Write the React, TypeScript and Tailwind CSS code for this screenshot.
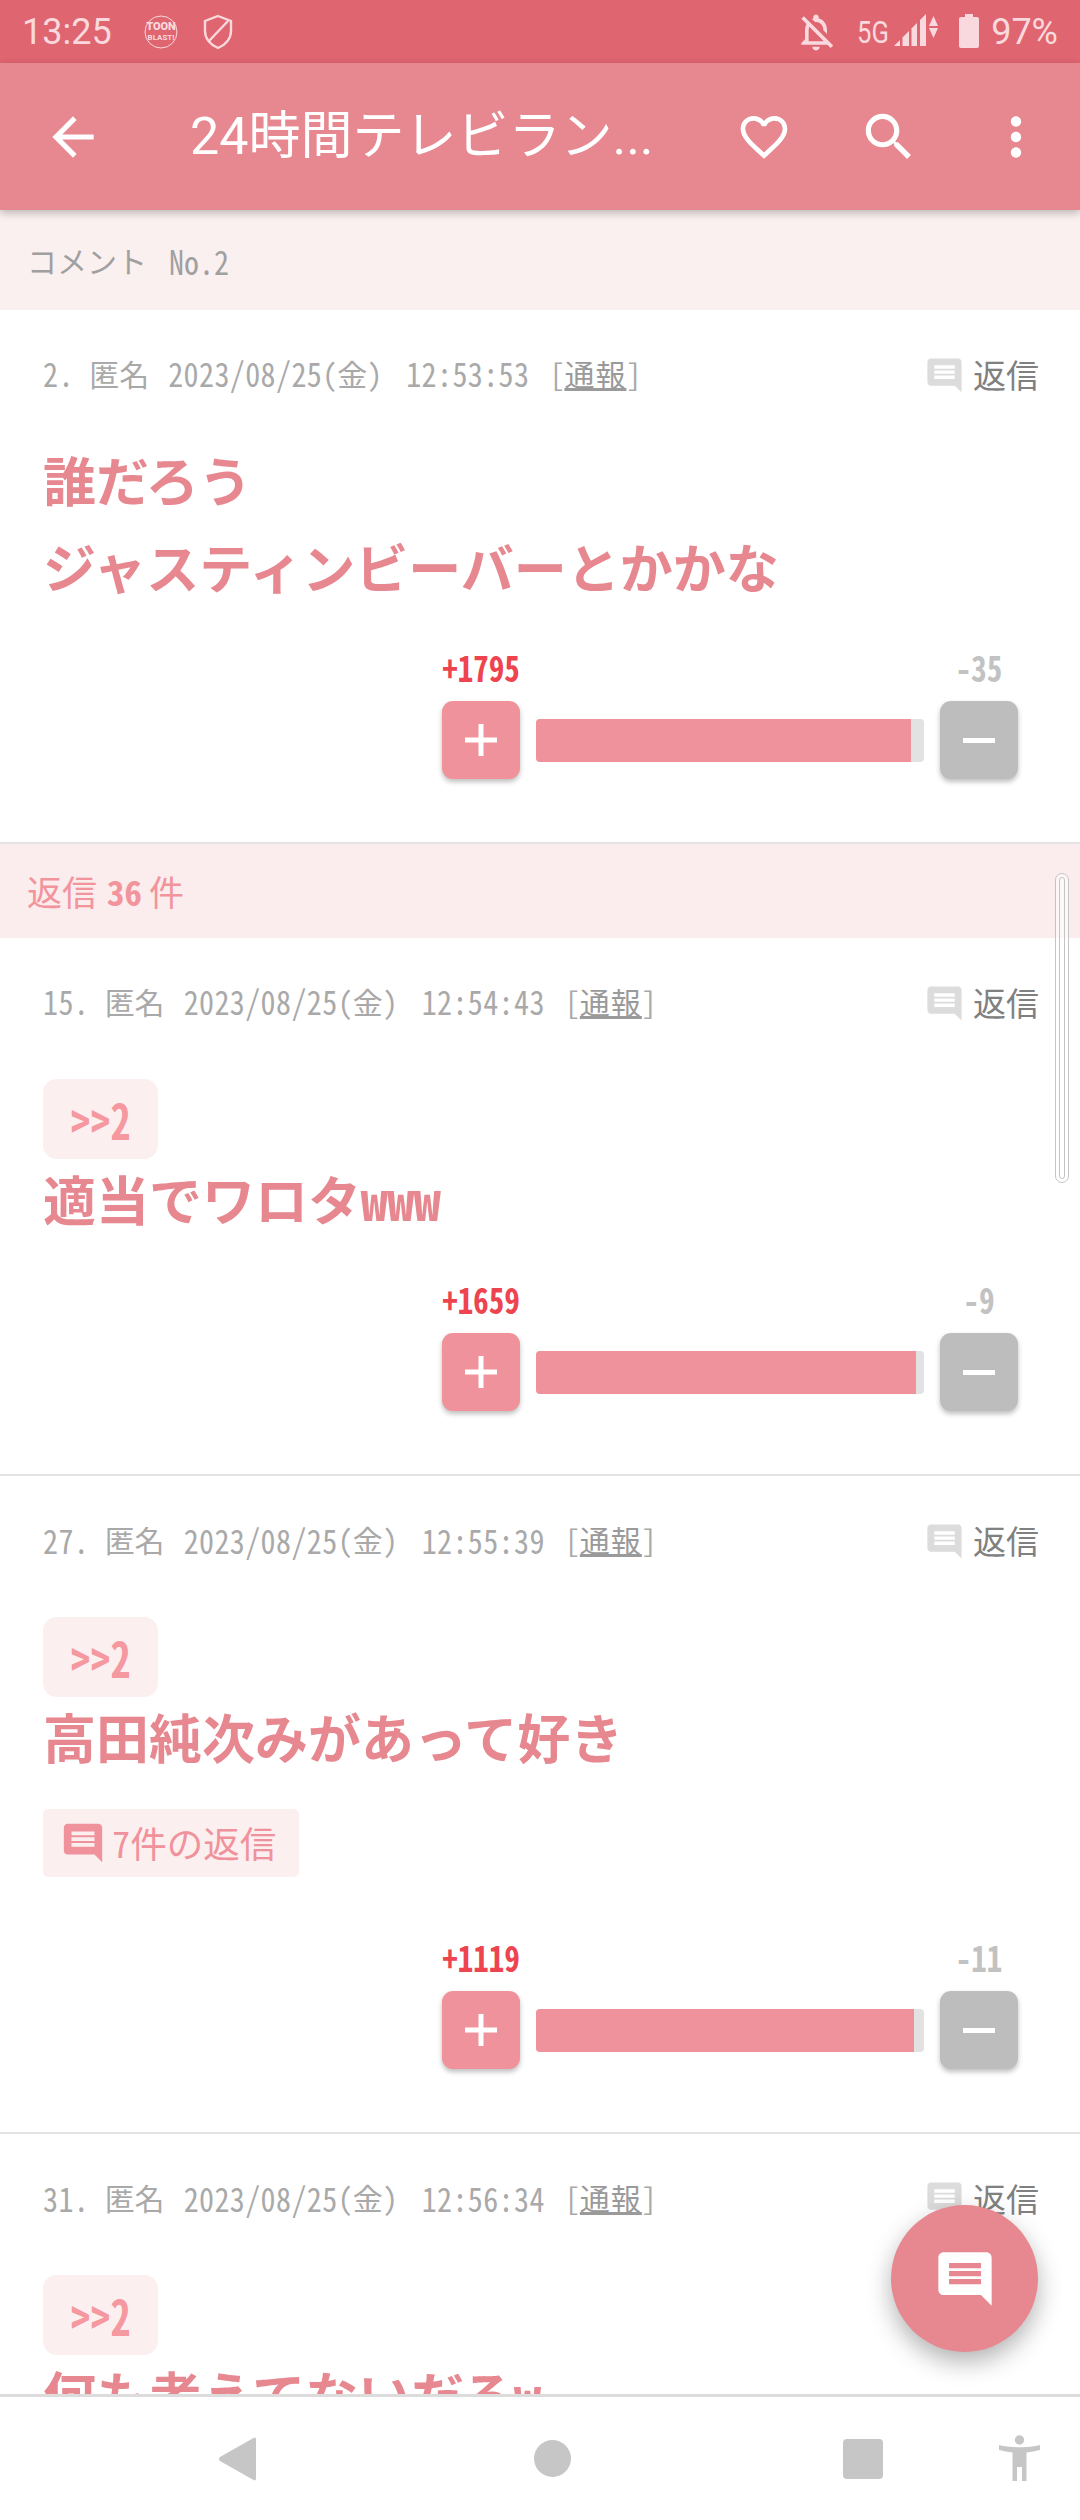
import type { ReactNode } from "react";

const cjk = "font-['Noto_Sans_CJK_JP',sans-serif]";
// half-width latin glyphs, the picture uses them for all digits
const hw = "[font-feature-settings:'hwid']";
const COMMENT_PATH =
  "M21.99 4c0-1.1-.89-2-1.99-2H4c-1.1 0-2 .9-2 2v12c0 1.1.9 2 2 2h14l4 4-.01-18zM18 14H6v-2h12v2zm0-3H6V9h12v2zm0-3H6V6h12v2z";

function Icon({ d, className }: { d: string; className: string }) {
  return (
    <svg viewBox="0 0 24 24" className={className} fill="currentColor">
      <path d={d} />
    </svg>
  );
}

function StatusBar() {
  return (
    <div className="flex h-[63px] shrink-0 items-center bg-[#df6570] pl-[22px] pr-[22px] font-['Roboto',sans-serif] text-[36px] text-[#f9d9dd]">
      <span>13:25</span>
      {/* game notification icon */}
      <svg viewBox="0 0 34 34" className="ml-[32px] h-[34px] w-[34px]">
        <circle cx="17" cy="17" r="16" fill="none" stroke="currentColor" strokeWidth="1" />
        <text x="17" y="15" textAnchor="middle" fontSize="11" fontWeight="900" fontFamily="Roboto" fill="currentColor">
          TOON
        </text>
        <text x="17" y="25" textAnchor="middle" fontSize="8" fontWeight="700" fontFamily="Roboto" fill="currentColor">
          BLAST!
        </text>
      </svg>
      <svg viewBox="0 0 30 36" className="ml-[25px] h-[36px] w-[30px]" fill="none" stroke="currentColor" strokeWidth="2.4">
        <path d="M15 2 L28 7 V17 C28 25 22 31 15 34 C8 31 2 25 2 17 V7 Z" />
        <path d="M6 27 L25 7" />
      </svg>
      <Icon
        d="M12 22c1.1 0 2-.9 2-2h-4c0 1.1.9 2 2 2zm0-15.5c2.49 0 4 2.02 4 4.5v.1l2 2V11c0-3.08-1.64-5.64-4.5-6.32V4c0-.83-.67-1.5-1.5-1.5s-1.5.67-1.5 1.5v.68c-.24.06-.47.15-.69.23l1.64 1.64c.18-.02.36-.05.55-.05zM5.41 3.35L4 4.76l2.81 2.81C6.29 8.57 6 9.74 6 11v5l-2 2v1h14.24l1.74 1.74 1.41-1.41L5.41 3.35zM16 17H8v-6c0-.68.12-1.32.34-1.9L16 16.76V17z"
        className="ml-auto h-[44px] w-[44px]"
      />
      <span className="ml-[19px] inline-block w-[37px] origin-left scale-x-[.8] whitespace-nowrap text-[32px]">5G</span>
      <svg viewBox="0 0 32 32" className="mb-[4px] h-[32px] w-[32px]" fill="currentColor">
        <polygon points="0,32 6,26 6,32" />
        <polygon points="8.5,32 8.5,23.5 15,17 15,32" />
        <polygon points="17.5,32 17.5,14.5 23,9 23,32" />
        <polygon points="26,32 26,6 32,0 32,32" />
      </svg>
      <svg viewBox="0 0 9 22" className="mb-[10px] ml-[3px] h-[22px] w-[9px]" fill="currentColor">
        <polygon points="4.5,0 9,10 0,10" />
        <polygon points="0,12 9,12 4.5,22" />
      </svg>
      <svg viewBox="0 0 20 34" className="mb-[2px] ml-[21px] h-[34px] w-[20px]" fill="currentColor">
        <path d="M6 0h8v3h4a2 2 0 0 1 2 2v27a2 2 0 0 1-2 2H2a2 2 0 0 1-2-2V5a2 2 0 0 1 2-2h4z" />
      </svg>
      <span className="ml-[12px]">97%</span>
    </div>
  );
}

function Header() {
  return (
    <div className="relative z-10 flex h-[147px] shrink-0 items-center bg-[#e7878f] pl-[42px] text-white shadow-[0_3px_8px_rgba(0,0,0,0.25)]">
      <Icon d="M20 11H7.83l5.59-5.59L12 4l-8 8 8 8 1.41-1.41L7.83 13H20v-2z" className="h-[62px] w-[62px]" />
      <div className="ml-[86px] w-[546px] font-['Roboto','Noto_Sans_CJK_JP',sans-serif] text-[52px]">24時間テレビラン...</div>
      <Icon
        d="M16.5 3c-1.74 0-3.41.81-4.5 2.09C10.91 3.81 9.24 3 7.5 3 4.42 3 2 5.42 2 8.5c0 3.78 3.4 6.86 8.55 11.54L12 21.35l1.45-1.32C18.6 15.36 22 12.28 22 8.5 22 5.42 19.58 3 16.5 3zm-4.4 15.55l-.1.1-.1-.1C7.14 14.24 4 11.39 4 8.5 4 6.5 5.5 5 7.5 5c1.54 0 3.04.99 3.57 2.36h1.87C13.46 5.99 14.96 5 16.5 5c2 0 3.5 1.5 3.5 3.5 0 2.89-3.14 5.74-7.9 10.05z"
        className="h-[56px] w-[56px]"
      />
      <Icon
        d="M15.5 14h-.79l-.28-.27C15.41 12.59 16 11.11 16 9.5 16 5.91 13.09 3 9.5 3S3 5.91 3 9.5 5.91 16 9.5 16c1.61 0 3.09-.59 4.23-1.57l.27.28v.79l5 4.99L20.49 19l-4.99-5zm-6 0C7.01 14 5 11.99 5 9.5S7.01 5 9.5 5 14 7.01 14 9.5 11.99 14 9.5 14z"
        className="ml-[66px] h-[62px] w-[62px]"
      />
      <Icon
        d="M12 8c1.1 0 2-.9 2-2s-.9-2-2-2-2 .9-2 2 .9 2 2 2zm0 2c-1.1 0-2 .9-2 2s.9 2 2 2 2-.9 2-2-.9-2-2-2zm0 6c-1.1 0-2 .9-2 2s.9 2 2 2 2-.9 2-2-.9-2-2-2z"
        className="ml-[65px] h-[62px] w-[62px]"
      />
    </div>
  );
}

function Reply() {
  return (
    <div className={`${cjk} mr-[-2px] flex items-center text-[33px] text-[#808080]`}>
      <Icon d={COMMENT_PATH} className="h-[41px] w-[41px] text-[#dcdcdc]" />
      <span className="ml-[8px]">返信</span>
    </div>
  );
}

function MetaRow({ no, date, time }: { no: string; date: string; time: string }) {
  const digits = `${hw} inline-block scale-y-[1.12] tracking-[.4px]`;
  return (
    <div className="flex h-[40px] items-center justify-between">
      <div className={`${cjk} mb-[3px] whitespace-pre text-[30px] text-[#a9a9a9]`}>
        <span className={digits}>{no}. </span>
        匿名
        <span className={hw}> </span>
        <span className={`${digits} ml-[4px]`}>{date}</span>
        <span className={hw}>(</span>金<span className={hw}>) </span>
        <span className={`${digits} ml-[9px]`}>{time}</span>
        <span className={`${hw} ml-[5px]`}> [</span>
        <span className="tracking-[1px] text-[#9a9a9a] underline">通報</span>
        <span className={hw}>]</span>
      </div>
      <Reply />
    </div>
  );
}

function Vote({ plus, minus, fill, top }: { plus: string; minus: string; fill: number; top: string }) {
  return (
    <div className={`ml-[399px] w-[576px] ${top}`}>
      <div className={`${cjk} ${hw} flex h-[40px] items-center justify-between text-[31px] font-bold`}>
        <span className="w-[78px] scale-y-[1.15] text-center text-[#ee4450]">{plus}</span>
        <span className="w-[78px] scale-y-[1.15] text-center text-[#c2c2c2]">{minus}</span>
      </div>
      <div className="mt-[14px] flex items-center">
        <div className="flex h-[78px] w-[78px] items-center justify-center rounded-[11px] bg-[#f0929b] shadow-[0_3px_5px_rgba(0,0,0,0.25)]">
          <svg viewBox="0 0 32 32" className="h-[32px] w-[32px]" fill="white">
            <rect x="13.5" y="0" width="5" height="32" />
            <rect x="0" y="13.5" width="32" height="5" />
          </svg>
        </div>
        <div className="mx-[16px] h-[43px] flex-1 overflow-hidden rounded-[4px] bg-[#e2e2e2]">
          <div className="h-full bg-[#f0929b]" style={{ width: `${fill}%` }} />
        </div>
        <div className="flex h-[78px] w-[78px] items-center justify-center rounded-[11px] bg-[#bdbdbd] shadow-[0_3px_5px_rgba(0,0,0,0.25)]">
          <div className="h-[5px] w-[32px] bg-white" />
        </div>
      </div>
    </div>
  );
}

function Badge({ top }: { top: string }) {
  return (
    <div
      className={`${cjk} ${hw} flex h-[80px] w-[115px] items-center justify-center rounded-[14px] bg-[#fceff0] text-[40px] font-bold text-[#f5989f] ${top}`}
    >
      <span className="inline-block scale-y-[1.25]">{">>2"}</span>
    </div>
  );
}

function Body({ children, top = "" }: { children: ReactNode; top?: string }) {
  return <div className={`${cjk} text-[53px] font-bold leading-[87px] text-[#e7878f] ${top}`}>{children}</div>;
}

export default function App() {
  return (
    <div className="relative flex h-[2520px] w-[1080px] flex-col overflow-hidden bg-white">
      <StatusBar />
      <Header />

      <div className="min-h-0 flex-1 overflow-hidden">
        <div className={`${cjk} flex h-[100px] items-center whitespace-pre bg-[#fbf0f0] pl-[27px] text-[30px] text-[#a0a0a0]`}>
          コメント
          <span className={`${hw} ml-[7px] inline-block scale-y-[1.12]`}> No.2</span>
        </div>

        <div className="border-b-2 border-[#e4e4e4] pl-[43px] pr-[43px] pt-[45px] pb-[63px]">
          <MetaRow no="2" date="2023/08/25" time="12:53:53" />
          <Body top="mt-[41px]">
            誰だろう
            <br />
            ジャスティンビーバーとかかな
          </Body>
          <Vote plus="+1795" minus="-35" fill={96.7} top="mt-[37px]" />
        </div>

        <div className={`${cjk} flex h-[94px] items-center whitespace-pre bg-[#fbecee] pl-[27px] text-[35px] text-[#f2949c]`}>
          返信<span className={`${hw} ml-[10px] font-bold`}>36</span>
          <span className="ml-[7px]">件</span>
        </div>

        <div className="border-b-2 border-[#e4e4e4] pl-[43px] pr-[43px] pt-[45px] pb-[63px]">
          <MetaRow no="15" date="2023/08/25" time="12:54:43" />
          <Badge top="mt-[56px]" />
          <Body top="-mt-[4px]">
            適当でワロタ<span className={hw}>www</span>
          </Body>
          <Vote plus="+1659" minus="-9" fill={98} top="mt-[37px]" />
        </div>

        <div className="border-b-2 border-[#e4e4e4] pl-[43px] pr-[43px] pt-[45px] pb-[63px]">
          <MetaRow no="27" date="2023/08/25" time="12:55:39" />
          <Badge top="mt-[56px]" />
          <Body top="-mt-[4px]">高田純次みがあって好き</Body>
          <div className={`${cjk} mt-[29px] flex h-[68px] w-[256px] items-center rounded-[5px] bg-[#fceff0] pl-[17px] text-[36.5px] text-[#f0929b]`}>
            <Icon d={COMMENT_PATH} className="h-[46px] w-[46px]" />
            <span className="ml-[6px]">
              <span className={hw}>7</span>件の返信
            </span>
          </div>
          <Vote plus="+1119" minus="-11" fill={97.4} top="mt-[60px]" />
        </div>

        <div className="pl-[43px] pr-[43px] pt-[45px]">
          <MetaRow no="31" date="2023/08/25" time="12:56:34" />
          <Badge top="mt-[56px]" />
          <Body top="-mt-[4px]">
            何も考えてないだろ<span className={hw}>w</span>
          </Body>
        </div>
      </div>

      <div className="relative flex h-[126px] shrink-0 items-center border-t-[3px] border-[#dcdcdc] bg-white pl-[219px] text-[#c6c6c6]">
        <svg viewBox="0 0 37 44" className="h-[44px] w-[37px]" fill="currentColor">
          <path d="M37 2 V42 a1.5 1.5 0 0 1-2.5 1 L1 24 a2.5 2.5 0 0 1 0-4 L34.5 1 a1.5 1.5 0 0 1 2.5 1z" />
        </svg>
        <div className="ml-[278px] h-[37px] w-[37px] rounded-full bg-current" />
        <div className="ml-[272px] h-[40px] w-[40px] rounded-[4px] bg-current" />
        <svg viewBox="0 0 41 47" className="ml-[116px] h-[47px] w-[41px]" fill="currentColor">
          <circle cx="20.5" cy="5" r="4.7" />
          <path d="M0 10 C10 13 31 13 41 10 L41 15 C36 16 32 17 27.5 17.5 L27.5 46 L23 46 L23 32 L18 32 L18 46 L13.5 46 L13.5 17.5 C9 17 5 16 0 15Z" />
        </svg>
      </div>

      {/* scrollbar thumb */}
      <div className="absolute left-[1055px] top-[873px] h-[310px] w-[14px] rounded-full border border-[#c4c4c4] bg-white/60 p-[3px]">
        <div className="h-full w-full rounded-full border border-[#c4c4c4]" />
      </div>

      {/* compose button */}
      <div className="absolute left-[891px] top-[2205px] flex h-[147px] w-[147px] items-center justify-center rounded-full bg-[#e7878f] text-white shadow-[0_10px_24px_rgba(0,0,0,0.3)]">
        <Icon d={COMMENT_PATH} className="h-[64px] w-[64px]" />
      </div>
    </div>
  );
}
